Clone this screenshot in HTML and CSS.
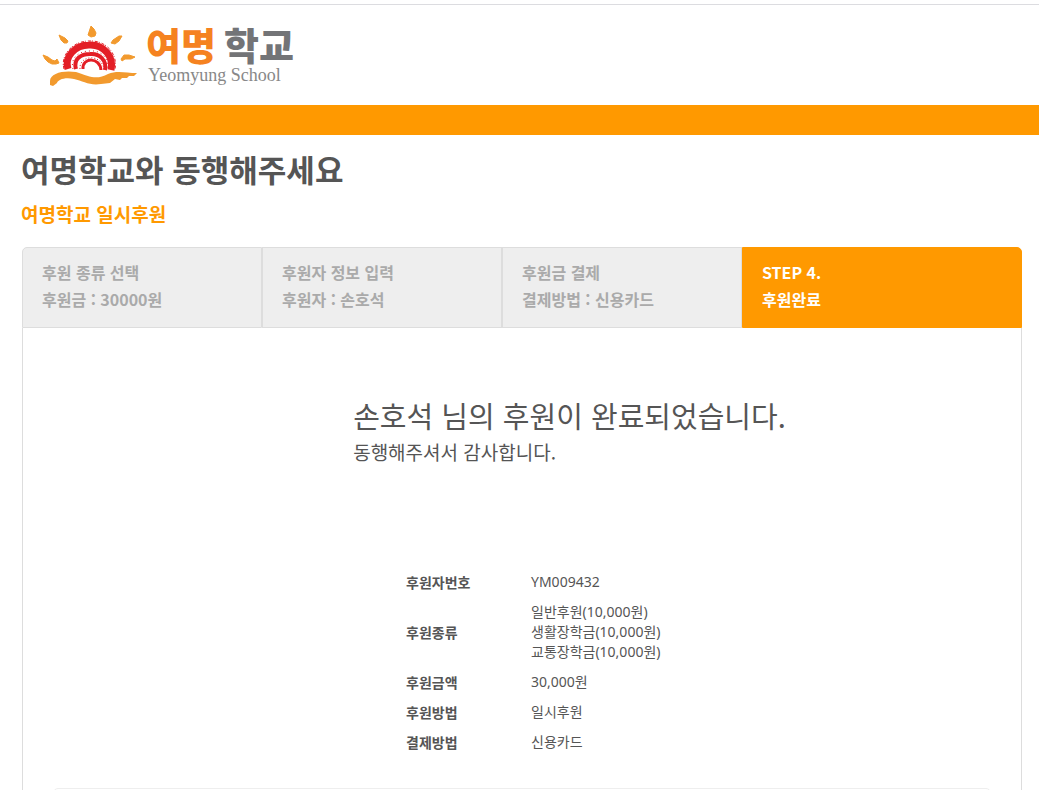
FILE: index.html
```
<!DOCTYPE html>
<html lang="ko">
<head>
  <meta charset="UTF-8">
  <meta name="viewport" content="width=device-width, initial-scale=1">
  <title>여명학교 일시후원</title>
  <link rel="stylesheet" href="styles.css">
</head>
<body>

  <header class="header">
    <a class="logo" href="#">
      <svg class="logo-mark" viewBox="0 0 98 62" aria-hidden="true">
        <!-- rays -->
        <g fill="#f29a2e" stroke="#f29a2e" stroke-width="1" stroke-linejoin="round">
          <path d="M1 30 L6 32 L10 35 L13 36 L15 34 L17 38 L14 39 L10 39 L6 37 L3 34Z"/>
          <path d="M17 10 L23 13 L26 16 L25 18 L22 18 L19 15Z"/>
          <path d="M49 1 L52 4 L54 8 L53 11 L49 12 L46 10Z"/>
          <path d="M80 11 L77 11 L71 15 L69 18 L73 19 L77 16Z"/>
          <path d="M79 34 L82 30 L87 30 L93 32 L89 34 L83 34 L80 36Z"/>
        </g>
        <!-- sun -->
        <g fill="none" stroke="#e31e26">
          <path stroke-width="7" d="M26 44 C22 32 33 20 47 20 C62 19 72 32 69 45"/>
          <path stroke-width="4" d="M34 44 C31 34 39 29 48 29 C58 28 65 36 63 45"/>
          <path stroke-width="3" d="M41 44 C40 32 58 32 59 45"/>
          <path stroke-width="1" stroke-dasharray="3 1 1 2" d="M22 44 C18 30 31 16 47 16 C65 15 76 30 73 44"/>
          <path stroke-width="1" stroke-dasharray="1 3" d="M31 44 C28 33 37 26 48 26 C60 25 67 34 66 45"/>
          <path stroke-width="1" stroke-dasharray="1 2" d="M38 44 C37 29 61 29 62 45"/>
        </g>
        <!-- ground -->
        <path fill="#f29a2e" d="M8 56 C8 48 22 45 34 47 C48 52 55 55 66 49 C75 45 84 48 95 48 L92 51 L87 51 L85 53 L80 53 L78 55 L73 54 L68 58 L59 59 C48 61 41 56 32 54 C22 52 16 55 15 58 L11 61 L8 60Z"/>
      </svg>
      <span class="logo-text">
        <strong class="logo-ko"><span>여명</span><span>학교</span></strong>
        <span class="logo-en">Yeomyung School</span>
      </span>
    </a>
  </header>
  <div class="bar"></div>

  <main class="container">
    <h1>여명학교와 동행해주세요</h1>
    <h2>여명학교 일시후원</h2>

    <ol class="steps">
      <li>후원 종류 선택<br>후원금 : 30000원</li>
      <li>후원자 정보 입력<br>후원자 : 손호석</li>
      <li>후원금 결제<br>결제방법 : 신용카드</li>
      <li class="active">STEP 4.<br>후원완료</li>
    </ol>

    <section class="content">
      <div class="message">
        <h3>손호석 님의 후원이 완료되었습니다.</h3>
        <p>동행해주셔서 감사합니다.</p>
      </div>

      <table class="result">
        <tr>
          <th scope="row">후원자번호</th>
          <td>YM009432</td>
        </tr>
        <tr>
          <th scope="row">후원종류</th>
          <td>일반후원(10,000원)<br>생활장학금(10,000원)<br>교통장학금(10,000원)</td>
        </tr>
        <tr>
          <th scope="row">후원금액</th>
          <td>30,000원</td>
        </tr>
        <tr>
          <th scope="row">후원방법</th>
          <td>일시후원</td>
        </tr>
        <tr>
          <th scope="row">결제방법</th>
          <td>신용카드</td>
        </tr>
      </table>

      <div class="panel"></div>
    </section>
  </main>

</body>
</html>
```
FILE: styles.css
```
* {
  box-sizing: border-box;
}
body {
  margin: 0;
  padding-top: 4px;
  background: #fff;
  color: #555;
  font-family: "Noto Sans CJK KR", sans-serif;
  font-size: 14px;
  line-height: 20px;
}
h1, h2, h3, p {
  margin: 0;
}

/* header */
.header {
  border-top: 1px solid #dcdce0;
  padding: 20px 42px;
}
.logo {
  display: flex;
  align-items: flex-start;
  gap: 6px;
  height: 60px;
  text-decoration: none;
}
.logo-mark {
  width: 98px;
  height: 62px;
}
.logo-ko {
  display: flex;
  gap: 8px;
  color: #737477;
  font-size: 38px;
  font-weight: 900;
  line-height: 38px;
}
.logo-ko span:first-child {
  color: #f58220;
}
.logo-en {
  display: block;
  padding: 2px 0 0 2px;
  color: #888;
  font-family: "Liberation Serif", serif;
  font-size: 18px;
  line-height: 20px;
}
.bar {
  height: 30px;
  background: #f90;
}

/* page */
.container {
  padding: 14px 17px 0 21px;
}
h1 {
  font-size: 31px;
  line-height: 40px;
}
h2 {
  margin: 10px 0 18px;
  color: #f90;
  font-size: 19px;
  line-height: 30px;
}

/* steps */
.steps {
  display: grid;
  grid-template-columns: 6fr 6fr 6fr 7fr;
  margin: 0 0 0 1px;
  padding: 0;
  list-style: none;
  color: #aaa;
  font-family: "Noto Sans CJK KR", sans-serif;
  font-size: 16px;
  font-weight: bold;
  line-height: 27px;
}
.steps li {
  padding: 11px 19px 14px;
  border: 1px solid #ddd;
  background: #eee;
}
.steps li:first-child {
  border-top-left-radius: 5px;
}
.steps .active {
  border-color: #f90;
  border-top-right-radius: 5px;
  background: #f90;
  color: #fff;
}

/* result */
.content {
  margin-left: 1px;
  padding: 63px 30px 30px;
  border: 1px solid #ddd;
  border-top: 0;
}
.message {
  padding-left: 32%;
}
.message h3 {
  font-size: 29px;
  font-weight: normal;
  line-height: 48px;
}
.message p {
  font-size: 19px;
  line-height: 26px;
}
.result {
  width: 30%;
  margin: 102px 0 31px 348px;
  border-collapse: collapse;
}
.result th, .result td {
  padding: 5px;
  text-align: left;
  white-space: nowrap;
}
.result th {
  width: 125px;
}
.result td {
  font-family: "Noto Sans", "Noto Sans CJK KR", sans-serif;
}
.panel {
  height: 60px;
  border: 1px solid #eee;
  border-radius: 5px;
}
```
